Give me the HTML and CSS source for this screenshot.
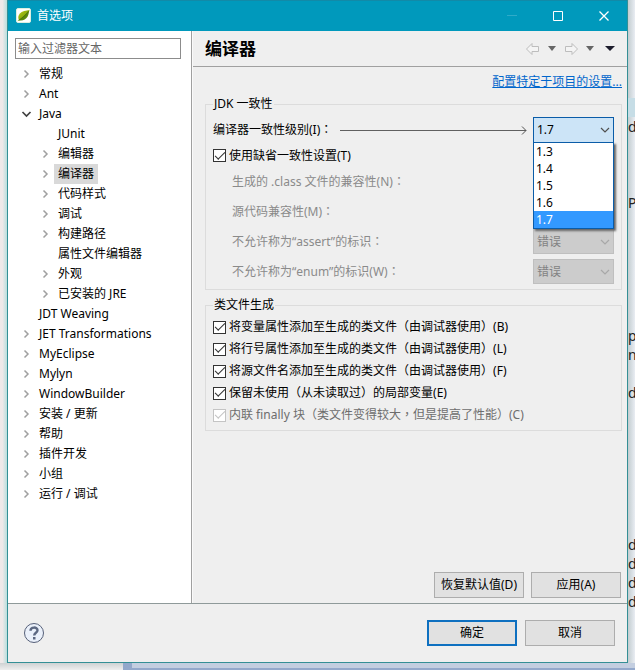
FILE: index.html
```html
<!DOCTYPE html>
<html lang="zh-CN">
<head>
<meta charset="utf-8">
<title>首选项</title>
<link rel="stylesheet" href="styles.css">
</head>
<body>
<div class="desktop">
  <div class="edge-left"></div>
  <div class="dialog">
    <header class="titlebar">
      <svg class="app-icon" width="16" height="16" viewBox="0 0 16 16">
        <defs><linearGradient id="leaf" x1="0" y1="0" x2="1" y2="1"><stop offset="0" stop-color="#b9cc20"/><stop offset=".5" stop-color="#8fae0c"/><stop offset=".55" stop-color="#55820a"/><stop offset="1" stop-color="#6c9a10"/></linearGradient></defs>
        <rect x=".5" y=".5" width="14" height="14" rx="1.5" fill="#fff" stroke="#dceee0"/>
        <path d="M13.500 2C10 2.500 6 3 3.800 5.500C2 7.800 2 10 2.800 11.500L1.500 13L3.800 12.400C7 12.800 9.800 11.500 11.500 8.800C12.800 6.500 12.800 4 13.500 2Z" fill="url(#leaf)"/>
        <path d="M3 12C6 10.500 9.500 7 12.500 3.200" fill="none" stroke="#4c7308" stroke-width=".8"/>
      </svg>
      <span class="caption">首选项</span>
      <button class="win-btn" aria-label="最小化" disabled><svg width="12" height="12" viewBox="0 0 12 12"><path d="M1 5.500H11" stroke="#2fabc9"/></svg></button>
      <button class="win-btn" aria-label="最大化"><svg width="12" height="12" viewBox="0 0 12 12"><path d="M1.500 1.500H10.500V10.500H1.500Z" fill="none" stroke="#fff"/></svg></button>
      <button class="win-btn" aria-label="关闭"><svg width="12" height="12" viewBox="0 0 12 12"><path d="M1.500 1.500L10.500 10.500M10.500 1.500L1.500 10.500" stroke="#fff" stroke-width="1.300"/></svg></button>
    </header>

    <svg class="symbols" aria-hidden="true">
      <symbol id="closed" viewBox="0 0 10 10"><path d="M3 1.500L6.500 5L3 8.500" fill="none" stroke="#a0a0a0" stroke-width="1.500"/></symbol>
      <symbol id="open" viewBox="0 0 10 10"><path d="M1 3L5 7L9 3" fill="none" stroke="#404040" stroke-width="1.700"/></symbol>
      <symbol id="down" viewBox="0 0 10 10"><path d="M1 3L5 7L9 3" fill="none" stroke="currentColor" stroke-width="1.200"/></symbol>
    </svg>

    <div class="body">
      <nav class="sidebar">
        <input class="filter" type="text" placeholder="输入过滤器文本" aria-label="输入过滤器文本">
        <ul class="tree">
          <li><div class="node"><svg><use href="#closed"/></svg><span>常规</span></div></li>
          <li><div class="node"><svg><use href="#closed"/></svg><span>Ant</span></div></li>
          <li><div class="node"><svg><use href="#open"/></svg><span>Java</span></div>
            <ul>
              <li><div class="node"><svg></svg><span>JUnit</span></div></li>
              <li><div class="node"><svg><use href="#closed"/></svg><span>编辑器</span></div></li>
              <li><div class="node"><svg><use href="#closed"/></svg><span class="selected">编译器</span></div></li>
              <li><div class="node"><svg><use href="#closed"/></svg><span>代码样式</span></div></li>
              <li><div class="node"><svg><use href="#closed"/></svg><span>调试</span></div></li>
              <li><div class="node"><svg><use href="#closed"/></svg><span>构建路径</span></div></li>
              <li><div class="node"><svg></svg><span>属性文件编辑器</span></div></li>
              <li><div class="node"><svg><use href="#closed"/></svg><span>外观</span></div></li>
              <li><div class="node"><svg><use href="#closed"/></svg><span>已安装的 JRE</span></div></li>
            </ul>
          </li>
          <li><div class="node"><svg></svg><span>JDT Weaving</span></div></li>
          <li><div class="node"><svg><use href="#closed"/></svg><span>JET Transformations</span></div></li>
          <li><div class="node"><svg><use href="#closed"/></svg><span>MyEclipse</span></div></li>
          <li><div class="node"><svg><use href="#closed"/></svg><span>Mylyn</span></div></li>
          <li><div class="node"><svg><use href="#closed"/></svg><span>WindowBuilder</span></div></li>
          <li><div class="node"><svg><use href="#closed"/></svg><span>安装 / 更新</span></div></li>
          <li><div class="node"><svg><use href="#closed"/></svg><span>帮助</span></div></li>
          <li><div class="node"><svg><use href="#closed"/></svg><span>插件开发</span></div></li>
          <li><div class="node"><svg><use href="#closed"/></svg><span>小组</span></div></li>
          <li><div class="node"><svg><use href="#closed"/></svg><span>运行 / 调试</span></div></li>
        </ul>
      </nav>

      <main class="page">
        <div class="page-head">
          <h1>编译器</h1>
          <button class="tool" aria-label="后退"><svg width="16" height="14" viewBox="0 0 16 14"><path d="M1.500 7L7 1.500V4.500H13.500V9.500H7V12.500Z" fill="#f4f4f4" stroke="#bdbdbd"/></svg></button>
          <button class="tool" aria-label="后退历史"><svg width="8" height="5" viewBox="0 0 8 5"><path d="M0 0H8L4 5Z" fill="#666"/></svg></button>
          <button class="tool" aria-label="前进"><svg width="16" height="14" viewBox="0 0 16 14"><path d="M14.500 7L9 1.500V4.500H2.500V9.500H9V12.500Z" fill="#f4f4f4" stroke="#bdbdbd"/></svg></button>
          <button class="tool" aria-label="前进历史"><svg width="8" height="5" viewBox="0 0 8 5"><path d="M0 0H8L4 5Z" fill="#666"/></svg></button>
          <button class="tool menu" aria-label="菜单"><svg width="10" height="5" viewBox="0 0 10 5"><path d="M0 0H10L5 5Z" fill="#1c1c2c"/></svg></button>
        </div>
        <div class="content">
          <div class="link-row"><a href="#project">配置特定于项目的设置...</a></div>
          <fieldset>
            <legend>JDK 一致性</legend>
            <div class="level-row">
              <label for="level">编译器一致性级别(I)<i lang="zh-TW">：</i></label>
              <div class="leader"><svg width="6" height="9" viewBox="0 0 6 9"><path d="M1 .5L5 4.500L1 8.500" fill="none" stroke="#505050"/></svg></div>
              <div class="combo active">
                <select id="level"><option>1.7</option></select>
                <svg><use href="#down"/></svg>
                <ul class="popup">
                  <li>1.3</li><li>1.4</li><li>1.5</li><li>1.6</li><li class="current">1.7</li>
                </ul>
              </div>
            </div>
            <label class="check default-check"><input type="checkbox" checked>使用缺省一致性设置(T)</label>
            <div class="options">
              <div class="option"><label for="cls">生成的 .class 文件的兼容性(N)<i lang="zh-TW">：</i></label><div class="combo"><select id="cls" disabled><option>1.7</option></select><svg><use href="#down"/></svg></div></div>
              <div class="option"><label for="src">源代码兼容性(M)<i lang="zh-TW">：</i></label><div class="combo"><select id="src" disabled><option>1.7</option></select><svg><use href="#down"/></svg></div></div>
              <div class="option"><label for="asrt">不允许称为“assert”的标识<i lang="zh-TW">：</i></label><div class="combo"><select id="asrt" disabled><option>错误</option></select><svg><use href="#down"/></svg></div></div>
              <div class="option"><label for="enm">不允许称为“enum”的标识(W)<i lang="zh-TW">：</i></label><div class="combo"><select id="enm" disabled><option>错误</option></select><svg><use href="#down"/></svg></div></div>
            </div>
          </fieldset>
          <fieldset class="classfile">
            <legend>类文件生成</legend>
            <label class="check"><input type="checkbox" checked><span>将变量属性添加至生成的类文件<i lang="zh-TW">（</i>由调试器使用<i lang="zh-TW">）</i>(B)</span></label>
            <label class="check"><input type="checkbox" checked><span>将行号属性添加至生成的类文件<i lang="zh-TW">（</i>由调试器使用<i lang="zh-TW">）</i>(L)</span></label>
            <label class="check"><input type="checkbox" checked><span>将源文件名添加至生成的类文件<i lang="zh-TW">（</i>由调试器使用<i lang="zh-TW">）</i>(F)</span></label>
            <label class="check"><input type="checkbox" checked><span>保留未使用<i lang="zh-TW">（</i>从未读取过<i lang="zh-TW">）</i>的局部变量(E)</span></label>
            <label class="check off"><input type="checkbox" checked disabled><span>内联 finally 块<i lang="zh-TW">（</i>类文件变得较大<i lang="zh-TW">，</i>但是提高了性能<i lang="zh-TW">）</i>(C)</span></label>
          </fieldset>
          <div class="actions">
            <button class="btn">恢复默认值(D)</button>
            <button class="btn">应用(A)</button>
          </div>
        </div>
      </main>
    </div>

    <footer class="footer">
      <button class="help" aria-label="帮助"><svg width="22" height="22" viewBox="0 0 22 22"><circle cx="11" cy="11" r="9.500" fill="#eaf0fa" stroke="#566079"/><path d="M7.500 8.800C7.500 4.600 14.500 4.600 14.500 8.200C14.500 10.800 11.200 10.600 11.200 13.500" fill="none" stroke="#5c6882" stroke-width="2.400"/><rect x="10" y="15" width="2.500" height="2.500" fill="#5c6882"/></svg></button>
      <button class="btn primary">确定</button>
      <button class="btn">取消</button>
    </footer>
  </div>
  <pre class="edge-right">d



P






p
n

d







d
d
d
d</pre>
  <div class="edge-bottom"><div class="back-panel"></div></div>
</div>
</body>
</html>
```

FILE: styles.css
```css
* {
  box-sizing: border-box;
}

body {
  margin: 0;
  font: 12px/16px "Noto Sans", "Noto Sans CJK SC", sans-serif;
  color: #000;
}

ul {
  list-style: none;
  margin: 0;
  padding: 0;
}

/* Full-width punctuation centred in its cell */
i {
  font-family: "Noto Sans CJK TC", sans-serif;
  font-style: normal;
  line-height: 1;
}

button,
input,
select {
  font: inherit;
  color: inherit;
}

.desktop {
  display: grid;
  grid-template-columns: 7px minmax(0, 1fr) 7px;
  grid-template-rows: minmax(0, 1fr) 7px;
  min-height: 100vh;
}

.edge-left {
  background: linear-gradient(to right, #efe9e9 0 35%, #b9dedd);
}

.edge-right {
  margin: 0;
  padding-top: 117px;
  overflow: hidden;
  font: 14px/19px "Noto Sans", sans-serif;
  color: #222;
  background: linear-gradient(to bottom, transparent 98px, #c6dde6 98px 117px, transparent 117px), linear-gradient(to right, #c3cdd0, #e9edf3);
}

.edge-bottom {
  grid-column: 1 / -1;
  display: flex;
  padding-left: 123px;
  background: linear-gradient(to bottom, #cfd2d3, #eeeeee);
}

.back-panel {
  flex: 1;
  border: solid #93a8cb;
  border-width: 0 0 2px 9px;
  background: #c3cee0;
}

.dialog {
  display: flex;
  flex-direction: column;
  border: solid #348f95;
  border-width: 0 1px 1px;
  background: #efefef;
}

.titlebar {
  display: flex;
  align-items: center;
  height: 31px;
  padding-left: 8px;
  color: #fff;
  background: #0099bc;
  border-top: 1px solid #128aa8;
}

.caption {
  flex: 1;
  margin-left: 5px;
}

.win-btn {
  display: flex;
  align-items: center;
  justify-content: center;
  width: 46px;
  height: 30px;
  padding: 0;
  border: 0;
  background: none;
}

.symbols {
  display: none;
}

.body {
  flex: 1;
  display: grid;
  grid-template-columns: 184px minmax(0, 1fr);
}

.sidebar {
  padding: 7px 10px 0 7px;
  background: #fff;
  border-right: 1px solid #a0a0a0;
}

.filter {
  display: block;
  width: 100%;
  height: 21px;
  padding: 0 2px;
  border: 1px solid #8c8c8c;
  background: #fff;
}

.filter::placeholder {
  color: #666;
  opacity: 1;
}

.tree {
  margin-top: 5px;
  padding-left: 6px;
}

.tree ul {
  padding-left: 19px;
}

.node {
  display: flex;
  align-items: center;
  gap: 3px;
  height: 20px;
}

.node svg {
  width: 11px;
  height: 10px;
}

.node span {
  padding: 0 4px;
  line-height: 20px;
  white-space: nowrap;
}

.node .selected {
  background: #d9d9d9;
}

.page {
  display: flex;
  flex-direction: column;
  border-left: 1px solid #fafafa;
}

.page-head {
  display: flex;
  align-items: center;
  gap: 7px;
  height: 36px;
  padding: 0 12px;
  border-bottom: 1px solid #a0a0a0;
}

h1 {
  flex: 1;
  margin: 0;
  font-size: 17px;
  line-height: 24px;
}

.tool {
  display: flex;
  padding: 0;
  border: 0;
  background: none;
}

.menu {
  margin-left: 4px;
}

.content {
  flex: 1;
  display: flex;
  flex-direction: column;
  padding: 1px 5px 5px 12px;
}

.link-row {
  height: 28px;
  line-height: 28px;
  text-align: right;
}

a {
  color: #0066cc;
}

fieldset {
  min-width: 0;
  margin: 0;
  padding: 5px 7px;
  border: 1px solid #dcdcdc;
}

legend {
  padding: 0 1px;
  line-height: 16px;
}

.level-row {
  display: flex;
  align-items: center;
  height: 26px;
}

.leader {
  flex: 1;
  display: flex;
  align-items: center;
  margin: 0 6px 0 8px;
}

.leader::before {
  content: "";
  flex: 1;
  height: 1px;
  margin-right: -5px;
  background: #606060;
}

.combo {
  position: relative;
  width: 81px;
  height: 25px;
  color: #838383;
}

.combo select {
  appearance: none;
  display: block;
  width: 100%;
  height: 100%;
  padding: 0 3px;
  border: 1px solid #bfbfbf;
  border-radius: 0;
  background: #cccccc;
  opacity: 1;
}

.combo > svg {
  position: absolute;
  right: 4px;
  top: 8px;
  width: 10px;
  height: 10px;
  color: #a8a8a8;
  pointer-events: none;
}

.combo.active {
  height: 26px;
  color: #000;
}

.combo.active select {
  border-color: #0a5ca8;
  background: #cce4f7;
}

.combo.active > svg {
  color: #505050;
}

.popup {
  position: absolute;
  z-index: 1;
  top: 25px;
  left: 0;
  width: 100%;
  border: 1px solid #0a5ca8;
  background: #fff;
  box-shadow: 2px 2px 2px #666;
}

.popup li {
  height: 17px;
  padding-left: 2px;
  line-height: 17px;
}

.popup .current {
  color: #fff;
  background: #3399ff;
}

.check {
  display: flex;
  align-items: center;
  gap: 3px;
  height: 22px;
  white-space: nowrap;
}

.default-check {
  height: 25px;
}

.check input {
  appearance: none;
  display: grid;
  place-items: center;
  flex: none;
  width: 13px;
  height: 13px;
  margin: 0;
  border: 1px solid #333;
  background: #fff;
}

.check input:checked::before {
  content: "";
  width: 9px;
  height: 4px;
  margin-bottom: 3px;
  border: solid #333;
  border-width: 0 0 1px 1px;
  transform: rotate(-45deg);
}

.check.off {
  color: #6d6d6d;
}

.check input:disabled,
.check input:disabled::before {
  border-color: #c4c4c4;
}

.options {
  display: grid;
  gap: 5px;
  margin-top: 1px;
  padding-left: 19px;
}

.option {
  display: flex;
  align-items: center;
  justify-content: space-between;
  color: #8a8a8a;
}

.classfile {
  margin-top: 7px;
  padding: 3px 7px 4px;
}

.actions {
  display: flex;
  justify-content: flex-end;
  gap: 7px;
  margin-top: auto;
  padding-right: 1px;
}

.btn {
  width: 90px;
  height: 26px;
  padding: 0;
  border: 1px solid #adadad;
  background: #e1e1e1;
}

.primary {
  border: 2px solid #0e70c0;
}

.footer {
  display: flex;
  align-items: center;
  gap: 8px;
  height: 59px;
  padding: 0 12px 0 15px;
  border-top: 1px solid #8f9a9a;
}

.help {
  display: flex;
  margin-right: auto;
  padding: 0;
  border: 0;
  background: none;
}
```
